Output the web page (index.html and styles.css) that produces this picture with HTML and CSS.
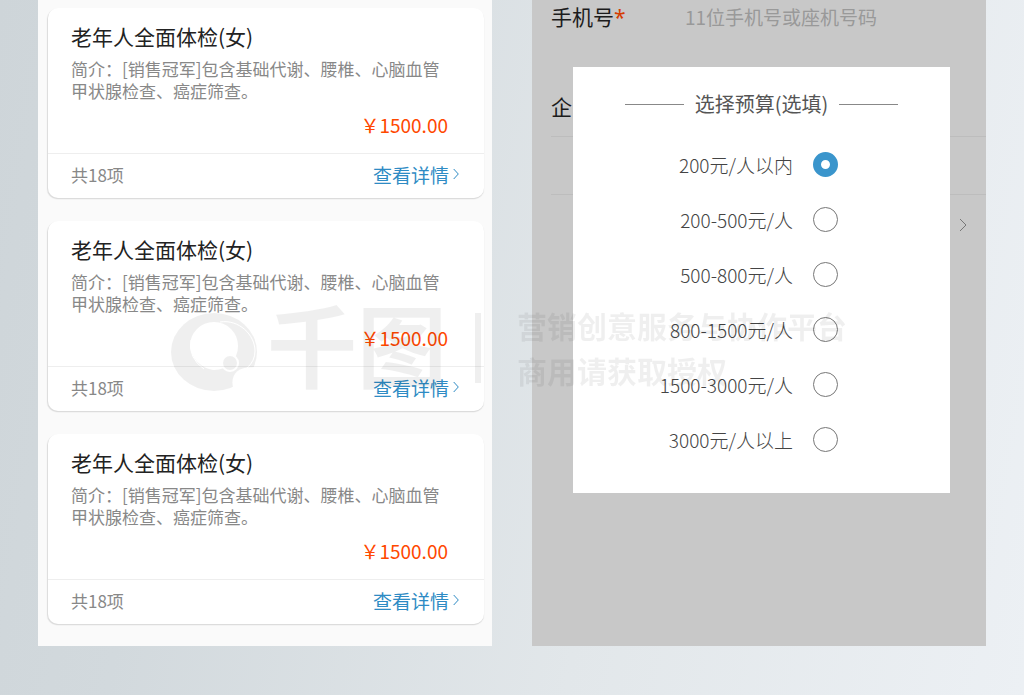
FILE: index.html
```html
<!DOCTYPE html>
<html lang="zh-CN">
<head>
<meta charset="utf-8">
<meta name="viewport" content="width=device-width, initial-scale=1">
<title>体检套餐</title>
<link rel="stylesheet" href="styles.css">
</head>
<body>
<main class="board">
  <section class="screen packages">
    <article class="card">
      <div class="card-body">
        <h2 class="card-title">老年人全面体检(女)</h2>
        <p class="card-desc">简介：[销售冠军]包含基础代谢、腰椎、心脑血管<br>甲状腺检查、癌症筛查。</p>
        <p class="card-price">￥1500.00</p>
      </div>
      <footer class="card-foot">
        <span>共18项</span>
        <a class="card-link" href="#">查看详情<svg class="chevron" viewBox="0 0 6 12" aria-hidden="true"><path d="M0.7 1 L5.3 6 L0.7 11"/></svg></a>
      </footer>
    </article>
    <article class="card">
      <div class="card-body">
        <h2 class="card-title">老年人全面体检(女)</h2>
        <p class="card-desc">简介：[销售冠军]包含基础代谢、腰椎、心脑血管<br>甲状腺检查、癌症筛查。</p>
        <p class="card-price">￥1500.00</p>
      </div>
      <footer class="card-foot">
        <span>共18项</span>
        <a class="card-link" href="#">查看详情<svg class="chevron" viewBox="0 0 6 12" aria-hidden="true"><path d="M0.7 1 L5.3 6 L0.7 11"/></svg></a>
      </footer>
    </article>
    <article class="card">
      <div class="card-body">
        <h2 class="card-title">老年人全面体检(女)</h2>
        <p class="card-desc">简介：[销售冠军]包含基础代谢、腰椎、心脑血管<br>甲状腺检查、癌症筛查。</p>
        <p class="card-price">￥1500.00</p>
      </div>
      <footer class="card-foot">
        <span>共18项</span>
        <a class="card-link" href="#">查看详情<svg class="chevron" viewBox="0 0 6 12" aria-hidden="true"><path d="M0.7 1 L5.3 6 L0.7 11"/></svg></a>
      </footer>
    </article>
  </section>

  <section class="screen form">
    <div class="field field-phone">
      <label class="field-label" for="phone">手机号<span class="required">*</span></label>
      <input class="field-input" id="phone" type="tel" placeholder="11位手机号或座机号码">
    </div>
    <div class="field field-company"><span class="field-label">企</span></div>
    <div class="field field-blank"></div>
    <div class="field field-more">
      <svg class="more" viewBox="0 0 8 14" aria-hidden="true"><path d="M1 1 L7 7 L1 13"/></svg>
    </div>

    <fieldset class="dialog">
      <legend class="dialog-title">选择预算(选填)</legend>
      <label class="option">200元/人以内<input type="radio" name="budget" checked></label>
      <label class="option">200-500元/人<input type="radio" name="budget"></label>
      <label class="option">500-800元/人<input type="radio" name="budget"></label>
      <label class="option">800-1500元/人<input type="radio" name="budget"></label>
      <label class="option">1500-3000元/人<input type="radio" name="budget"></label>
      <label class="option">3000元/人以上<input type="radio" name="budget"></label>
    </fieldset>
  </section>

  <div class="watermark">
    <svg class="mark" viewBox="0 0 88 86" aria-hidden="true">
      <mask id="mark-cut">
        <rect width="88" height="86" fill="#fff"/>
        <circle cx="43" cy="41" r="24" fill="#000"/>
        <path d="M19 43 A28 28 0 0 0 52 65 A24 24 0 0 1 19 43 Z" fill="#fff"/>
        <path d="M20 35 Q17 53 33 64 M49 17 C68 14 84 30 84 46 Q84 56 76 63" fill="none" stroke="#000"/>
        <circle cx="59" cy="58" r="8" fill="#fff" stroke="#000" stroke-width="2"/>
        <path d="M62 82 C59 68 69 60 88 63 L88 86 L64 86 Z" fill="#000"/>
      </mask>
      <ellipse cx="43" cy="47" rx="43" ry="39" mask="url(#mark-cut)"/>
    </svg>
    <span class="mark-name">千图</span>
    <span class="mark-rule"></span>
    <p class="mark-text">营销创意服务与协作平台<br>商用请获取授权</p>
  </div>
</main>
</body>
</html>
```
FILE: styles.css
```css
* {
  box-sizing: border-box;
}

body {
  margin: 0;
  min-height: 100vh;
  font-family: "Noto Sans CJK SC", sans-serif;
  background: linear-gradient(100deg, #ced5d9 0%, #d2d9dd 20%, #e2e7ea 60%, #ecf0f4 100%);
}

h2,
p {
  margin: 0;
  font-weight: 400;
}

.board {
  position: relative;
  display: grid;
  grid-template-columns: repeat(2, minmax(0, 1fr));
  gap: 40px;
  padding: 0 38px 49px;
}

.packages {
  display: flex;
  flex-direction: column;
  gap: 23px;
  padding: 8px 8px 22px 10px;
  background: #fafafa;
}

.card {
  border-radius: 10px;
  background: #fff;
  box-shadow: -1px 1px 1px #dcdcdc, 0 1px 1px #d8d8d8;
}

.card-body {
  padding: 12px 36px 13px 23px;
}

.card-title {
  font-size: 21px;
  line-height: 32px;
  color: #222;
}

.card-desc {
  padding-top: 6px;
  font-size: 17px;
  line-height: 22px;
  color: #888;
  white-space: nowrap;
}

.card-price {
  padding-top: 8px;
  font-size: 19px;
  line-height: 30px;
  text-align: right;
  color: #ff4800;
}

.card-foot {
  display: flex;
  justify-content: space-between;
  align-items: center;
  height: 45px;
  padding: 0 25px 4px 23px;
  border-top: 1px solid #eee;
  font-size: 17px;
  color: #888;
}

.card-link {
  display: flex;
  align-items: center;
  gap: 4px;
  font-size: 19px;
  color: #2e8bc4;
  text-decoration: none;
}

.chevron {
  width: 6px;
  height: 12px;
}

.chevron path,
.more path {
  fill: none;
  stroke: currentColor;
}

.form {
  position: relative;
  background: #c8c8c8;
}

.field {
  display: flex;
  align-items: center;
  margin-left: 19px;
}

.field-label {
  width: 134px;
  font-size: 21px;
  line-height: 32px;
  color: #1c1c1c;
}

.required {
  font-family: "Noto Sans", sans-serif;
  line-height: 20px;
  color: #d43c00;
}

.field-input {
  flex: 1;
  min-width: 0;
  padding: 0;
  border: 0;
  background: none;
  font: inherit;
  font-size: 19px;
}

.field-input::placeholder {
  color: #999;
}

.field-phone {
  height: 32px;
}

.field-company {
  height: 105px;
  padding-top: 44px;
  border-bottom: 1px solid #bdbdbd;
}

.field-blank {
  height: 58px;
  border-bottom: 1px solid #bdbdbd;
}

.field-more {
  justify-content: flex-end;
  height: 60px;
  padding-right: 19px;
  color: #777;
}

.more {
  width: 8px;
  height: 14px;
}

.dialog {
  position: absolute;
  top: 67px;
  left: 41px;
  right: 36px;
  margin: 0;
  padding: 22px 0 26px;
  border: 0;
  background: #fff;
}

.dialog-title {
  float: left;
  display: flex;
  justify-content: center;
  align-items: center;
  gap: 11px;
  width: 100%;
  margin-bottom: 18px;
  padding: 0;
  font-size: 20px;
  line-height: 30px;
  color: #555;
}

.dialog-title::before,
.dialog-title::after {
  content: "";
  width: 59px;
  height: 1px;
  background: #888;
}

.option {
  clear: both;
  display: flex;
  justify-content: flex-end;
  align-items: center;
  gap: 20px;
  height: 55px;
  padding-right: 112px;
  font-size: 19px;
  font-weight: 300;
  color: #444;
}

.option input {
  appearance: none;
  width: 25px;
  height: 25px;
  margin: 0;
  border: 1px solid #777;
  border-radius: 50%;
}

.option input:checked {
  border: 8px solid #3a95cc;
}

.watermark {
  position: absolute;
  top: 302px;
  left: 171px;
  display: flex;
  align-items: center;
  color: #000;
  opacity: 0.06;
  pointer-events: none;
}

.mark {
  width: 88px;
  height: 86px;
}

.mark-name {
  margin-left: 8px;
  padding-bottom: 12px;
  font-size: 90px;
  font-weight: 700;
  line-height: 80px;
}

.mark-rule {
  width: 6px;
  height: 70px;
  margin: 0 36px 0 28px;
  background: #000;
}

.mark-text {
  font-size: 30px;
  font-weight: 700;
  line-height: 45px;
  white-space: nowrap;
}
```
